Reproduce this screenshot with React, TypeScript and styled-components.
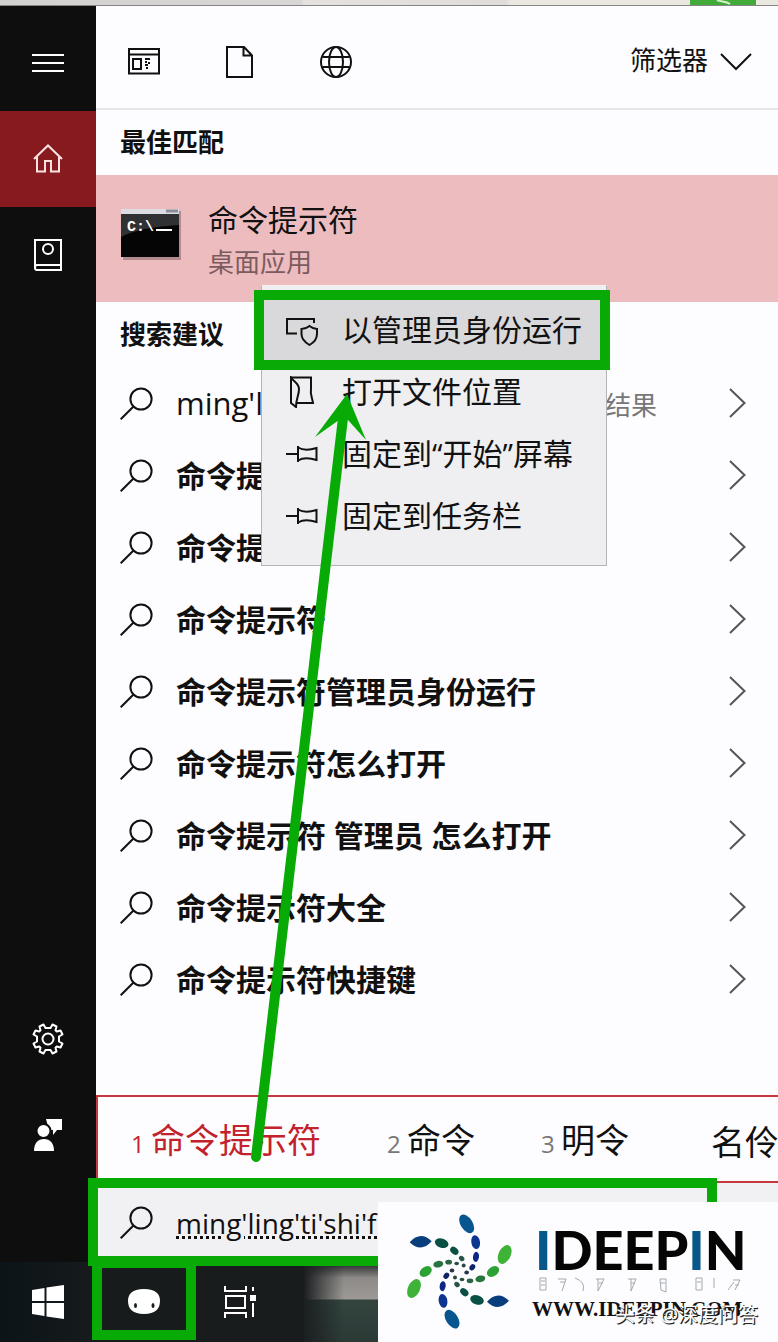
import React from "react";
import styled, { createGlobalStyle } from "styled-components";

const GREEN = "#08ab05";

const GlobalStyle = createGlobalStyle`
  * { box-sizing: border-box; }
  body {
    margin: 0;
    background: #fdfcfe;
    font-family: "Open Sans", "Noto Sans CJK SC", sans-serif;
    color: #111;
  }
  button {
    font: inherit;
    color: inherit;
    background: none;
    border: 0;
    padding: 0;
    margin: 0;
    text-align: left;
    cursor: pointer;
  }
  h2, ul { margin: 0; padding: 0; list-style: none; }
  svg { display: block; flex: none; }
`;

const Page = styled.div`
  position: relative;
  display: flex;
  flex-direction: column;
  min-height: 100vh;
  overflow: hidden;
`;

const WindowStrip = styled.div`
  display: flex;
  justify-content: flex-end;
  height: 6px;
  padding-right: 22px;
  border-bottom: 1px solid #858585;
  background: linear-gradient(90deg, #d3d1cf 0, #d9d7d5 302px, #e4e1df 303px, #dfdcda 506px, #ebe8e2 510px);
`;

const StripBadge = styled.div`
  width: 66px;
  background: #41ab3a;
`;

const Body = styled.div`
  display: flex;
  flex: 1;
`;

const Sidebar = styled.nav`
  display: flex;
  flex-direction: column;
  flex: none;
  width: 96px;
  padding: 9px 0 79px;
  background: #0f0e0e;
  color: #fff;
`;

const SideButton = styled.button<{ $active?: boolean }>`
  display: flex;
  align-items: center;
  justify-content: center;
  height: 96px;
  color: ${(p) => (p.$active ? "#fbe3e4" : "#fff")};
  background: ${(p) => (p.$active ? "#861a1e" : "transparent")};
`;

const Spacer = styled.div`
  flex: 1;
`;

const Panel = styled.main`
  position: relative;
  display: flex;
  flex-direction: column;
  flex: 1;
  min-width: 0;
`;

const Filters = styled.header`
  display: flex;
  align-items: center;
  height: 104px;
  padding: 10px 26px 0 0;
  border-bottom: 2px solid #e6e4e8;
`;

const FilterButton = styled.button`
  display: flex;
  justify-content: center;
  width: 96px;
`;

const FilterMenuButton = styled.button`
  display: flex;
  align-items: center;
  gap: 12px;
  margin-left: auto;
  font-size: 26px;
  line-height: 32px;

  span { padding-bottom: 4px; }
`;

const Heading = styled.h2`
  padding: 0 24px;
  font-size: 26px;
  line-height: 65px;
`;

const BestMatch = styled.button`
  display: flex;
  gap: 27px;
  height: 127px;
  padding: 24px 24px 0;
  background: #edbcbf;
`;

const BestText = styled.span`
  display: flex;
  flex-direction: column;
`;

const BestTitle = styled.span`
  font-size: 30px;
  line-height: 42px;
`;

const BestKind = styled.span`
  font-size: 26px;
  line-height: 42px;
  color: #7c5b60;
`;

const SuggestionArea = styled.section`
  position: relative;
  flex: 1;
  padding-bottom: 79px;
`;

const Suggestion = styled.button<{ $plain?: boolean }>`
  display: flex;
  align-items: center;
  gap: 23px;
  width: 100%;
  height: 72px;
  padding: 0 32px 0 24px;
  font-size: ${(p) => (p.$plain ? 31 : 30)}px;
  line-height: 40px;
  font-weight: ${(p) => (p.$plain ? 400 : 700)};
  white-space: nowrap;
`;

const SuggestionLabel = styled.span`
  flex: 1;
  padding-top: 2px;
`;

const Hint = styled.span`
  padding-left: 17px;
  font-size: 26px;
  color: #777;
`;

const Menu = styled.div`
  position: absolute;
  top: -17px;
  left: 165px;
  width: 346px;
  padding: 13px 0 18px;
  border: 1px solid #b4b4b6;
  border-top-color: #f6f2f2;
  background: #efeef0;
`;

const MenuItem = styled.button<{ $selected?: boolean }>`
  position: relative;
  display: flex;
  align-items: center;
  gap: 24px;
  width: 100%;
  height: 62px;
  padding-left: 24px;
  font-size: 30px;
  line-height: 40px;
  white-space: nowrap;
  background: ${(p) => (p.$selected ? "#d9d8da" : "transparent")};
`;

const Highlight = styled.span<{ $inset: string }>`
  position: absolute;
  inset: ${(p) => p.$inset};
  border: 10px solid ${GREEN};
  pointer-events: none;
`;

const Candidates = styled.ul`
  display: flex;
  align-items: center;
  gap: 66px;
  height: 88px;
  padding: 6px 0 0 33px;
  border: solid #c4383e;
  border-width: 2px 0 2px 2px;
  overflow: hidden;
`;

const Candidate = styled.li<{ $active?: boolean; $numbered?: boolean }>`
  display: flex;
  align-items: baseline;
  flex: none;
  padding-left: ${(p) => (p.$numbered ? 0 : 16)}px;
  font-size: 34px;
  line-height: 48px;
  color: ${(p) => (p.$active ? "#c2222c" : "#111")};
`;

const CandidateIndex = styled.span<{ $active?: boolean }>`
  width: 20px;
  font-size: 24px;
  color: ${(p) => (p.$active ? "inherit" : "#777")};
`;

const SearchBar = styled.label`
  position: relative;
  display: flex;
  align-items: center;
  gap: 23px;
  height: 79px;
  padding: 0 24px;
  background: #f1f0f2;
`;

const SearchInput = styled.input`
  flex: 1;
  min-width: 0;
  padding: 0;
  border: 0;
  outline: 0;
  background: transparent;
  color: #111;
  font-family: "Open Sans", sans-serif;
  font-size: 28px;
  line-height: 40px;
  text-decoration: underline dotted 3px;
  text-underline-offset: 2px;
`;

const Taskbar = styled.footer`
  display: flex;
  height: 80px;
  background: linear-gradient(90deg, #0b1418, #171b1c 96px, #1b1f20);
`;

const TaskButton = styled.button`
  position: relative;
  display: flex;
  align-items: center;
  justify-content: center;
  width: 96px;
`;

const TaskPreview = styled.div`
  flex: 1;
  margin-left: 16px;
  background:
    linear-gradient(90deg, #1b1f20 0, transparent 40px),
    linear-gradient(#1b1f20 0, #8d8a87 16px, #9c9996 37px, #33443f 38px, #2c3a36);
`;

const Brand = styled.aside`
  position: absolute;
  right: 0;
  bottom: 0;
  display: flex;
  gap: 18px;
  width: 400px;
  height: 140px;
  padding: 11px 0 0 26px;
  background: #fdfcfe;
`;

const BrandText = styled.div`
  position: relative;
  display: flex;
  flex-direction: column;
  padding-top: 10px;
`;

const BrandName = styled.span`
  padding-left: 3px;
  font-family: Lato, sans-serif;
  font-size: 54px;
  line-height: 54px;
  font-weight: 900;
  color: #050505;

  b { font-weight: 900; color: #07578a; }
`;

const BrandUrl = styled.a`
  padding-top: 4px;
  font-family: "Liberation Serif", serif;
  font-size: 21px;
  line-height: 24px;
  font-weight: 700;
  color: #111;
  text-decoration: none;
`;

const Credit = styled.span`
  position: absolute;
  left: 83px;
  top: 88px;
  font-size: 20px;
  line-height: 28px;
  white-space: nowrap;
  color: #fff;
  text-shadow: 1px 1px 0 #222, 1px 1px 1px #444;
`;

const Arrow = styled.svg`
  position: absolute;
  left: 154px;
  top: 387px;
  pointer-events: none;
`;

const Icon = ({ size = 32, w = 2, children }: { size?: number; w?: number; children: React.ReactNode }) => (
  <svg width={size} height={size} viewBox={`0 0 ${size} ${size}`} fill="none" stroke="currentColor" strokeWidth={w} aria-hidden="true">
    {children}
  </svg>
);

const SearchIcon = () => (
  <Icon size={33}>
    <circle cx="21" cy="12" r="10.6" />
    <path d="M13.5 19.5 0.7 32.3" />
  </Icon>
);

const PinIcon = () => (
  <Icon>
    <path d="M0 16H12M12 8V24M12 9.500C18 13 24 12 30.500 10V22C24 20 18 19 12 22.500" />
  </Icon>
);

const ChevronRight = () => (
  <svg width="17" height="30" viewBox="0 0 17 30" fill="none" stroke="#555" strokeWidth="2" aria-hidden="true">
    <path d="M1 1 15.500 15 1 29" />
  </svg>
);

const suggestions = [
  "命令提示符下载",
  "命令提示符在哪",
  "命令提示符",
  "命令提示符管理员身份运行",
  "命令提示符怎么打开",
  "命令提示符 管理员 怎么打开",
  "命令提示符大全",
  "命令提示符快捷键",
];

const menuItems = [
  {
    label: "以管理员身份运行",
    icon: (
      <Icon>
        <path d="M11 19.500H1V5H28V9" />
        <path d="M23.500 12C21 14 18.500 15 15.500 15V20C15.500 26 20 29 23.500 31C27 29 31 26 31 20V15C28 15 26 14 23.500 12Z" />
      </Icon>
    ),
  },
  {
    label: "打开文件位置",
    icon: (
      <Icon>
        <path d="M5 1.500H25V13C24 18 26 21 27 27H11" />
        <path d="M5 1.500C8 6 13 7 13 13C13 20 10 22 10 31L5 27Z" />
      </Icon>
    ),
  },
  { label: "固定到“开始”屏幕", icon: <PinIcon /> },
  { label: "固定到任务栏", icon: <PinIcon /> },
];

const candidates = [
  { index: "1", text: "命令提示符" },
  { index: "2", text: "命令" },
  { index: "3", text: "明令" },
  { index: "", text: "名伶" },
];

const LogoArms = () => (
  <g>
    <g fill="#075690">
      <ellipse cx="268" cy="432" rx="31" ry="18" transform="rotate(58 268 432)" />
      <ellipse cx="295" cy="487" rx="21" ry="13" fill="#0b3590" transform="rotate(80 295 487)" />
      <ellipse cx="296" cy="531" rx="15" ry="9" fill="#0b2786" transform="rotate(98 296 531)" />
      <ellipse cx="285" cy="562" rx="10" ry="8" fill="#0f2468" transform="rotate(125 285 562)" />
      <ellipse cx="268" cy="578" rx="7" ry="6" fill="#26344e" />
    </g>
    <g fill="#0a5044">
      <path d="M97 487Q130 451 163 484Q131 520 97 487Z" fill="#083e7c" />
      <ellipse cx="193" cy="490" rx="21" ry="14" transform="rotate(18 193 490)" />
      <ellipse cx="231" cy="513" rx="14" ry="10" transform="rotate(42 231 513)" />
      <ellipse cx="253" cy="536" rx="9" ry="7" fill="#285148" transform="rotate(45 253 536)" />
      <circle cx="259" cy="557" r="6" fill="#2d4746" />
    </g>
    <g fill="#22963a">
      <ellipse cx="382" cy="524" rx="30" ry="18" fill="#3eb337" transform="rotate(-64 382 524)" />
      <ellipse cx="347" cy="575" rx="20" ry="14" fill="#2da234" transform="rotate(-35 347 575)" />
      <ellipse cx="309" cy="597" rx="15" ry="10" fill="#26743e" transform="rotate(-12 309 597)" />
      <ellipse cx="278" cy="603" rx="10" ry="7" fill="#2b6343" />
      <ellipse cx="254" cy="599" rx="7" ry="5" fill="#294c42" />
    </g>
  </g>
);

export default function App() {
  return (
    <>
      <GlobalStyle />
      <Page>
        <WindowStrip>
          <StripBadge>
            <svg width="66" height="5" viewBox="0 0 66 5" aria-hidden="true">
              <path d="M27 0C31 2 36 1 40 4" fill="none" stroke="#d5f2c8" strokeWidth="2" />
            </svg>
          </StripBadge>
        </WindowStrip>

        <Body>
          <Sidebar aria-label="导航">
            <SideButton aria-label="菜单">
              <Icon>
                <path d="M0 8H32M0 16H32M0 24H32" />
              </Icon>
            </SideButton>
            <SideButton $active aria-label="主页">
              <Icon>
                <path d="M2 16 16 2.500 30 16M5 14V28.500H13V18H19V28.500H27V14" />
              </Icon>
            </SideButton>
            <SideButton aria-label="笔记本">
              <Icon>
                <path d="M3 29V1H29V31H5Q3 31 3 29Q3 26 5 26H29" />
                <circle cx="16" cy="10" r="5" />
              </Icon>
            </SideButton>
            <Spacer />
            <SideButton aria-label="设置">
              <Icon>
                <circle cx="16" cy="16" r="5.500" />
                <path
                  strokeLinejoin="round"
                  d="M13.500 5 11.500 1.500 7.500 3.500 8.500 7.200 7.200 8.500 3.500 7.500 1.500 11.500 5 13.500V18.500L1.500 20.500 3.500 24.500 7.200 23.500 8.500 24.800 7.500 28.500 11.500 30.500 13.500 27H18.500L20.500 30.500 24.500 28.500 23.500 24.800 24.800 23.500 28.500 24.500 30.500 20.500 27 18.500V13.500L30.500 11.500 28.500 7.500 24.800 8.500 23.500 7.200 24.500 3.500 20.500 1.500 18.500 5Z"
                />
              </Icon>
            </SideButton>
            <SideButton aria-label="反馈">
              <Icon>
                <g fill="currentColor" stroke="none">
                  <path d="M14 0H30V11H25L21 16V11H17Z" />
                  <circle cx="11.500" cy="12" r="7" stroke="#0f0e0e" strokeWidth="2" />
                  <path d="M2 32C2 24 6 20 12 20S22 24 22 32Z" />
                </g>
              </Icon>
            </SideButton>
          </Sidebar>

          <Panel>
            <Filters>
              <FilterButton aria-label="应用">
                <Icon>
                  <path d="M1 3H31V27.500H1ZM1 8.500H31" />
                  <rect x="5" y="13" width="8" height="10" />
                  <path d="M17 13H22M17 16H19M21 16V18M17 19H20M18 22H20" />
                </Icon>
              </FilterButton>
              <FilterButton aria-label="文档">
                <Icon>
                  <path d="M3 1H20L28 9.500V31H3ZM19.500 1V9.500H28" />
                </Icon>
              </FilterButton>
              <FilterButton aria-label="网页">
                <Icon>
                  <circle cx="16" cy="16" r="15" />
                  <ellipse cx="16" cy="16" rx="7" ry="15" />
                  <path d="M2.500 11H29.500M2.500 21H29.500" />
                </Icon>
              </FilterButton>
              <FilterMenuButton>
                <span>筛选器</span>
                <svg width="32" height="18" viewBox="0 0 32 18" fill="none" stroke="currentColor" strokeWidth="2" aria-hidden="true">
                  <path d="M1 1 16 16 31 1" />
                </svg>
              </FilterMenuButton>
            </Filters>

            <Heading>最佳匹配</Heading>
            <BestMatch>
              <svg width="61" height="61" viewBox="0 0 61 61" aria-hidden="true">
                <rect x="3" y="12" width="58" height="50" fill="#b48c90" />
                <rect x="1" y="10" width="58" height="48" fill="#050505" />
                <rect x="1" y="10" width="58" height="5" fill="#dcdde2" />
                <path d="M46 12H58" stroke="#8b8d99" strokeWidth="3" />
                <path d="M1 15H59V26Q20 28 1 38Z" fill="#303133" />
                <text x="7" y="32" fill="#fff" fontFamily="Liberation Mono, monospace" fontSize="15" fontWeight="700">C:\</text>
                <path d="M36 31H52" stroke="#fff" strokeWidth="2" />
              </svg>
              <BestText>
                <BestTitle>命令提示符</BestTitle>
                <BestKind>桌面应用</BestKind>
              </BestText>
            </BestMatch>

            <SuggestionArea>
              <Heading>搜索建议</Heading>
              <Suggestion $plain>
                <SearchIcon />
                <SuggestionLabel>
                  ming'ling'ti'shi'fu
                  <Hint>- 查看网络搜索结果</Hint>
                </SuggestionLabel>
                <ChevronRight />
              </Suggestion>
              {suggestions.map((text) => (
                <Suggestion key={text}>
                  <SearchIcon />
                  <SuggestionLabel>{text}</SuggestionLabel>
                  <ChevronRight />
                </Suggestion>
              ))}

              <Menu role="menu">
                {menuItems.map((item, i) => (
                  <MenuItem key={item.label} role="menuitem" $selected={i === 0}>
                    {item.icon}
                    <span>{item.label}</span>
                    {i === 0 && <Highlight $inset="-9px -4px -9px -8px" />}
                  </MenuItem>
                ))}
              </Menu>
            </SuggestionArea>

            <Candidates>
              {candidates.map((c, i) => (
                <Candidate key={c.text} $active={i === 0} $numbered={c.index !== ""}>
                  {c.index && <CandidateIndex $active={i === 0}>{c.index}</CandidateIndex>}
                  {c.text}
                </Candidate>
              ))}
            </Candidates>

            <SearchBar>
              <SearchIcon />
              <SearchInput aria-label="搜索" defaultValue="ming'ling'ti'shi'fu" spellCheck={false} />
              <Highlight $inset="-5px 61px -4px -8px" />
            </SearchBar>

            <Arrow width="120" height="775" viewBox="250 393 120 775" aria-hidden="true">
              <path d="M256 1157 343 418" stroke={GREEN} strokeWidth="10" strokeLinecap="round" />
              <path d="M347 394 366 440 348 420 339 420 315 437Z" fill={GREEN} />
            </Arrow>
          </Panel>
        </Body>

        <Taskbar>
          <TaskButton aria-label="开始">
            <svg width="32" height="34" viewBox="0 0 32 34" fill="#fff" aria-hidden="true">
              <path d="M0 5 12.500 3V16H0ZM14.500 2.500 32 0V16H14.500ZM0 18H12.500V31L0 29ZM14.500 18H32V34L14.500 31.500Z" />
            </svg>
          </TaskButton>
          <TaskButton aria-label="助手">
            <svg width="34" height="26" viewBox="0 0 34 26" aria-hidden="true">
              <path d="M17 0C29 0 33 5 33 12C33 20 28 25 17 25S1 20 1 12C1 5 5 0 17 0Z" fill="#fff" />
              <ellipse cx="8.500" cy="16.500" rx="1.500" ry="2.500" fill="#1b1f20" />
              <ellipse cx="26" cy="16.500" rx="1.500" ry="2.500" fill="#1b1f20" />
            </svg>
            <Highlight $inset="-4px -4px 2px -4px" />
          </TaskButton>
          <TaskButton aria-label="任务视图">
            <Icon>
              <g stroke="#fff">
                <path d="M1 0V5H22V0M1 32V27H22V32M2 10H21V22H2ZM29 1V5M29 17V31" />
                <path d="M26 12H32" strokeWidth="6" />
              </g>
            </Icon>
          </TaskButton>
          <TaskPreview />
        </Taskbar>

        <Brand>
          <svg width="110" height="117" viewBox="80 400 330 350" aria-hidden="true">
            <LogoArms />
            <g transform="rotate(180 246 575)">
              <LogoArms />
            </g>
          </svg>
          <BrandText>
            <BrandName>
              <b>I</b>DEEP<b>I</b>N
            </BrandName>
            <svg width="210" height="16" viewBox="0 0 210 16" fill="none" stroke="#a3a9b0" aria-hidden="true">
              <path d="M8 1H14V13H8ZM9 4H13M9 8H13M26 2H34L30 14M28 5H33M43 1Q54 5 51 14M64 2H72L66 14V2M67 6H71M96 2H104L99 14V2M99 6H103M128 2H134V15L129 13ZM129 6H133M164 1H170V13H164ZM165 5H169M182 1V11M201 3H208L203 13M202 5 196 13M203 8H207" />
            </svg>
            <BrandUrl href="#">WWW.IDEEPIN.COM</BrandUrl>
            <Credit>头条 @深度问答</Credit>
          </BrandText>
        </Brand>
      </Page>
    </>
  );
}
